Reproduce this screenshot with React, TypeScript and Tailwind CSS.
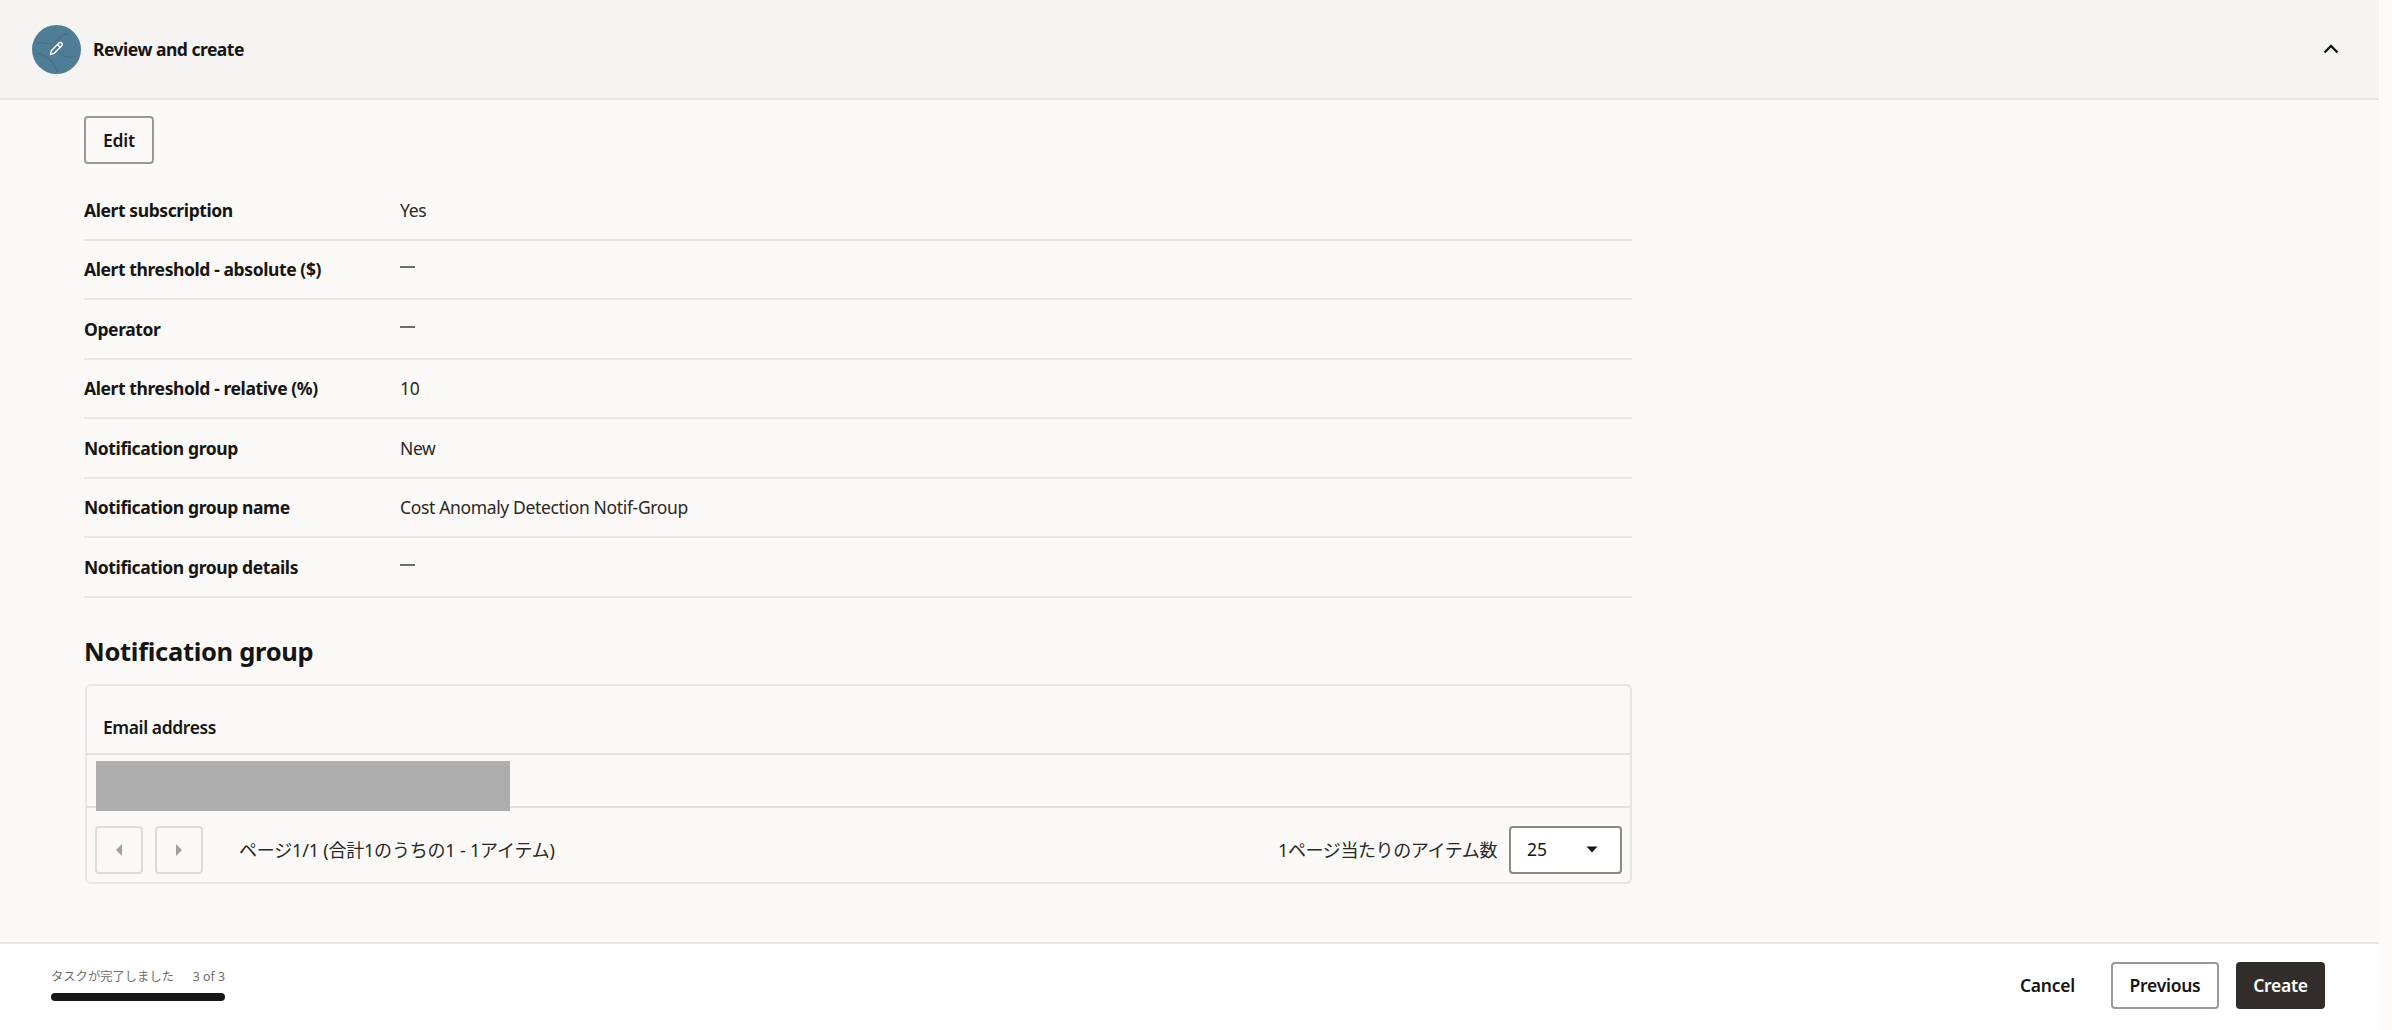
import React from "react";

const font = { fontFamily: '"Noto Sans", "Noto Sans CJK JP", sans-serif' };

const rows: [string, string][] = [
  ["Alert subscription", "Yes"],
  ["Alert threshold - absolute ($)", "—"],
  ["Operator", "—"],
  ["Alert threshold - relative (%)", "10"],
  ["Notification group", "New"],
  ["Notification group name", "Cost Anomaly Detection Notif-Group"],
  ["Notification group details", "—"],
];

function Row({ label, value }: { label: string; value: string }) {
  const dash = value === "—";
  return (
    <div className="flex h-[59.5px] items-center border-b-2 border-[#e8e6e3]">
      <div className="w-[316px] shrink-0 text-[17.5px] font-bold tracking-[-0.4px] text-[#161513]">{label}</div>
      {dash ? (
        <div className="mb-[4px] h-[2px] w-[15px] bg-[#6f6c69]" />
      ) : (
        <div className="text-[17.5px] tracking-[-0.35px] text-[#2a2826]">{value}</div>
      )}
    </div>
  );
}

function PagerButton({ dir }: { dir: "left" | "right" }) {
  return (
    <div className="flex h-[48px] w-[48px] items-center justify-center rounded-[4px] border-2 border-[#dedbd8]">
      <svg width="8" height="14" viewBox="0 0 8 14">
        <path d={dir === "left" ? "M7 1v12L1 7z" : "M1 1v12l6-6z"} fill="#a3a09d" />
      </svg>
    </div>
  );
}

export default function App() {
  return (
    <div className="h-[1030px] w-full overflow-hidden bg-[#fcfbfa]" style={font}>
      <div className="flex h-full w-[2379px] flex-col bg-[#faf9f7]">
        <header className="flex h-[100px] shrink-0 items-center border-b-2 border-[#e6e4e1] bg-[#f5f4f2] pl-[32px] pr-[40px]">
          <div className="flex h-[49px] w-[49px] items-center justify-center rounded-full bg-[#4f7d96]">
            <svg width="49" height="49" viewBox="0 0 49 49" fill="none">
              <g stroke="#3f6b83" strokeWidth="1" opacity="0.8">
                <path d="M5 18c8-2 12 4 18-1s8-9 14-8" />
                <path d="M23 17c3 5 2 10 7 13s9 3 14 1" />
                <path d="M4 30c6-3 10 2 15 6s4 8 6 11" />
              </g>
              <path d="M18.5 29.5l.8-3.8 7.7-7.7a1.9 1.9 0 0 1 2.7 0a1.9 1.9 0 0 1 0 2.7l-7.7 7.7z" stroke="#fff" strokeWidth="1.4" strokeLinejoin="round" />
              <path d="M25.5 19.5l3 3" stroke="#fff" strokeWidth="1.2" />
            </svg>
          </div>
          <div className="ml-[12px] mt-[1px] text-[17.5px] font-bold tracking-[-0.5px] text-[#161513]">Review and create</div>
          <svg className="ml-auto" width="16" height="10" viewBox="0 0 16 10" fill="none">
            <path d="M1.5 8.5L8 2l6.5 6.5" stroke="#161513" strokeWidth="2.4" />
          </svg>
        </header>

        <main className="flex-1 pl-[84px]">
          <div className="w-[1548px]">
            <div className="mt-[16px] flex h-[48px] w-[70px] items-center justify-center rounded-[4px] border-2 border-[#9b9895] text-[17.5px] font-semibold tracking-[-0.2px] text-[#161513]">
              Edit
            </div>
            <div className="mt-[17px]">
              {rows.map(([l, v]) => (
                <Row key={l} label={l} value={v} />
              ))}
            </div>
            <h2 className="mt-[33px] text-[25.5px] font-bold leading-[40px] tracking-[-0.3px] text-[#161513]">Notification group</h2>
            <div className="relative ml-[1px] mt-[13px] h-[200px] w-[1547px] rounded-[6px] border-2 border-[#e8e6e3]">
              <div className="flex h-[69px] items-end border-b-2 border-[#e3e1de] pb-[12px] pl-[16px] text-[17.5px] font-semibold tracking-[-0.4px] text-[#161513]">
                Email address
              </div>
              <div className="h-[53px] border-b-2 border-[#e3e1de]" />
              <div className="absolute left-[9px] top-[75px] h-[50px] w-[414px] bg-[#adadad]" />
              <div className="flex h-[74px] items-center px-[8px] pt-[10px]">
                <div className="flex gap-[12px]">
                  <PagerButton dir="left" />
                  <PagerButton dir="right" />
                </div>
                <div className="ml-[36px] mt-[2px] text-[18px] tracking-[-0.2px] text-[#2a2826]">ページ1/1 (合計1のうちの1 - 1アイテム)</div>
                <div className="ml-auto mr-[12px] mt-[2px] text-[18px] tracking-[-0.4px] text-[#2a2826]">1ページ当たりのアイテム数</div>
                <div className="flex h-[48px] w-[113px] items-center justify-between rounded-[4px] border-2 border-[#8a8784] bg-white pl-[16px] pr-[22px] text-[17.5px] text-[#161513]">
                  25
                  <svg width="12" height="7" viewBox="0 0 12 7"><path d="M0.5 0.5h11L6 6.5z" fill="#161513" /></svg>
                </div>
              </div>
            </div>
          </div>
        </main>

        <footer className="flex h-[88px] shrink-0 items-center border-t-2 border-[#e8e6e3] bg-white pb-[4px] pl-[51px] pr-[54px]">
          <div className="w-[174px]">
            <div className="flex justify-between text-[12.3px] leading-[16px] text-[#6f6c69]">
              <span>タスクが完了しました</span>
              <span>3 of 3</span>
            </div>
            <div className="mt-[8px] h-[8px] rounded-full bg-[#161513]" />
          </div>
          <div className="ml-auto text-[17.5px] font-semibold tracking-[-0.25px] text-[#161513]">Cancel</div>
          <div className="ml-[36px] flex h-[47px] w-[108px] items-center justify-center rounded-[4px] border-2 border-[#9b9895] text-[17.5px] font-semibold tracking-[-0.25px] text-[#161513]">
            Previous
          </div>
          <div className="ml-[17px] flex h-[47px] w-[89px] items-center justify-center rounded-[4px] bg-[#312d2a] text-[17.5px] font-semibold tracking-[-0.25px] text-white">
            Create
          </div>
        </footer>
      </div>
    </div>
  );
}
